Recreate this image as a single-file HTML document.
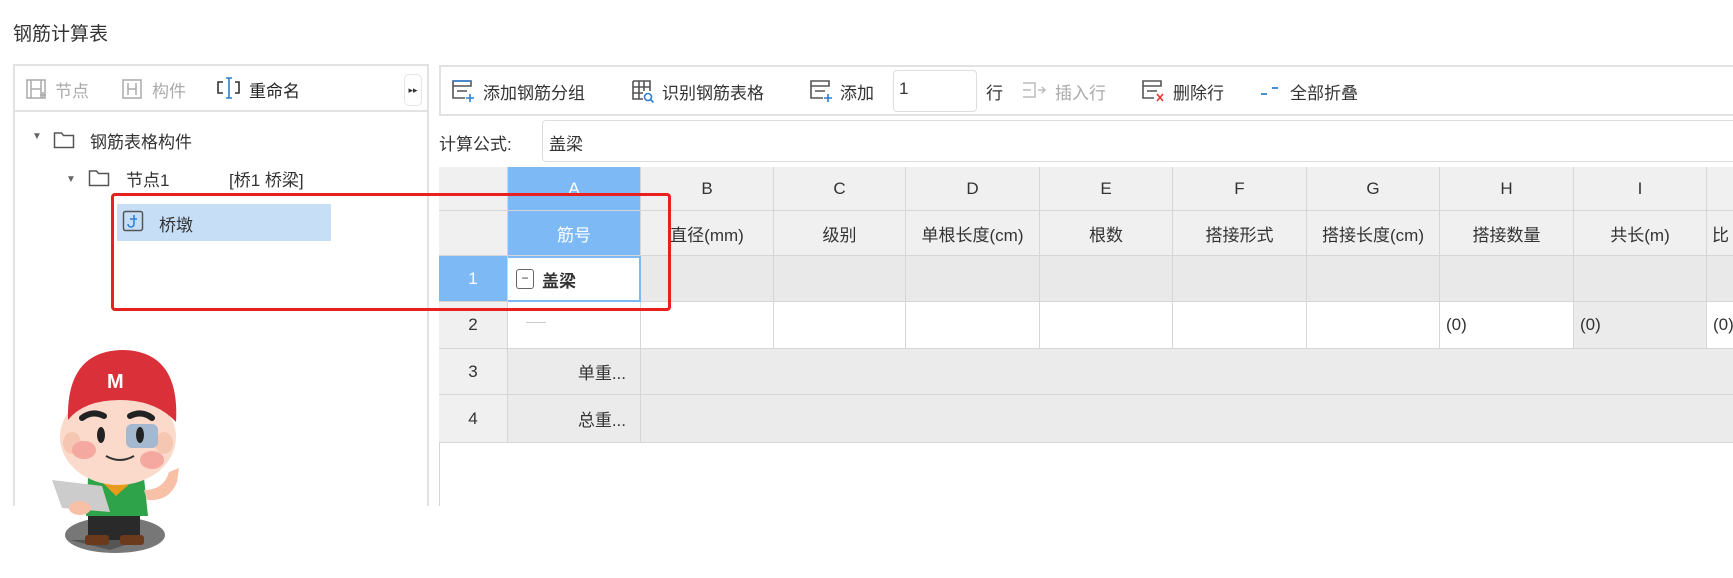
<!DOCTYPE html>
<html><head><meta charset="utf-8"><style>
*{margin:0;padding:0;box-sizing:border-box}
body{width:1733px;height:578px;background:#fff;font-family:"Liberation Sans","Noto Sans CJK SC",sans-serif;color:#333;position:relative;overflow:hidden;font-size:17px}
.a{position:absolute;white-space:nowrap}
.g{color:#aaa}
.cell{position:absolute;border-right:1px solid #d6d6d6;border-bottom:1px solid #d6d6d6;display:flex;align-items:center;justify-content:center;font-size:17px}
</style></head><body>
<div class="a" style="left:13px;top:19px;font-size:19px;color:#333">钢筋计算表</div>

<div class="a" style="left:13px;top:64px;width:416px;height:442px;border:2px solid #e2e2e2;border-bottom:none"></div>
<div class="a" style="left:13px;top:110px;width:416px;height:2px;background:#e2e2e2"></div>
<svg class="a" style="left:25px;top:77px" width="24" height="24" viewBox="0 0 24 24" fill="none" stroke="#aaa" stroke-width="1.5"><path d="M2 3h18v18H2z M6 3v18 M16 3v18 M6 12h10"/><path d="M15 18h6M18 15v6" stroke="#aaa"/></svg>
<div class="a g" style="left:55px;top:77px">节点</div>
<svg class="a" style="left:121px;top:77px" width="22" height="24" viewBox="0 0 22 24" fill="none" stroke="#aaa" stroke-width="1.5"><path d="M2 3h18v18H2z M7 6v12 M15 6v12 M7 12h8"/></svg>
<div class="a g" style="left:152px;top:77px">构件</div>
<svg class="a" style="left:215px;top:75px" width="28" height="26" viewBox="0 0 28 26" fill="none" stroke-width="1.6"><path d="M8 7H3v11h5 M20 7h4v11h-4" stroke="#333"/><path d="M14 3v20 M11 3h6 M11 23h6" stroke="#2d7fd3"/></svg>
<div class="a" style="left:249px;top:77px;color:#222">重命名</div>
<div class="a" style="left:404px;top:74px;width:18px;height:32px;border:1px solid #e5e5e5;border-radius:5px;font-size:9px;display:flex;align-items:center;justify-content:center;color:#333">▸▸</div>

<div class="a" style="left:32px;top:131px;font-size:10px;color:#666">▼</div>
<svg class="a" style="left:53px;top:130px" width="22" height="20" viewBox="0 0 22 20" fill="none" stroke="#555" stroke-width="1.5"><path d="M1.5 3h7l2 2.5h10v12h-19z"/></svg>
<div class="a" style="left:90px;top:128px">钢筋表格构件</div>
<div class="a" style="left:66px;top:174px;font-size:10px;color:#666">▼</div>
<svg class="a" style="left:88px;top:168px" width="22" height="20" viewBox="0 0 22 20" fill="none" stroke="#555" stroke-width="1.5"><path d="M1.5 3h7l2 2.5h10v12h-19z"/></svg>
<div class="a" style="left:126px;top:166px">节点1</div>
<div class="a" style="left:229px;top:166px">[桥1 桥梁]</div>
<div class="a" style="left:117px;top:204px;width:214px;height:37px;background:#c6def6"></div>
<svg class="a" style="left:122px;top:210px" width="22" height="22" viewBox="0 0 22 22" fill="none" stroke-width="1.5"><rect x="1.5" y="1.5" width="19" height="19" rx="2" stroke="#555"/><path d="M12 5v9a3 3 0 0 1-6 0 M8 9h7" stroke="#2d7fd3"/></svg>
<div class="a" style="left:159px;top:211px">桥墩</div>

<div class="a" style="left:439px;top:65px;width:1300px;height:51px;border:2px solid #e2e2e2;border-right:none"></div>
<svg class="a" style="left:450px;top:78px" width="26" height="26" viewBox="0 0 26 26" fill="none" stroke-width="1.6"><path d="M3 3h18v5H3z M3 8v12h12 M7 13h10" stroke="#555"/><path d="M3 3h18" stroke="#2d7fd3"/><path d="M16 20h8M20 16v8" stroke="#2d7fd3"/></svg>
<div class="a" style="left:483px;top:79px">添加钢筋分组</div>
<svg class="a" style="left:630px;top:78px" width="26" height="26" viewBox="0 0 26 26" fill="none" stroke-width="1.6"><path d="M3 3h17v10 M3 3v18h10 M3 9h17 M9 3v18 M14 3v10 M3 15h10" stroke="#555"/><circle cx="18" cy="19" r="3.5" stroke="#2d7fd3"/><path d="M20.5 21.5l3 3" stroke="#2d7fd3"/></svg>
<div class="a" style="left:662px;top:79px">识别钢筋表格</div>
<svg class="a" style="left:808px;top:78px" width="26" height="26" viewBox="0 0 26 26" fill="none" stroke-width="1.6"><path d="M3 3h18v5H3z M3 8v12h12 M7 13h10" stroke="#555"/><path d="M16 20h8M20 16v8" stroke="#2d7fd3"/></svg>
<div class="a" style="left:840px;top:79px">添加</div>
<div class="a" style="left:893px;top:70px;width:84px;height:42px;border:1px solid #ddd;border-radius:4px;padding:8px 5px">1</div>
<div class="a" style="left:986px;top:79px">行</div>
<svg class="a" style="left:1020px;top:79px" width="28" height="24" viewBox="0 0 28 24" fill="none" stroke="#bbb" stroke-width="1.5"><path d="M3 4h12v14H3 M3 11h8 M18 11h7 M22 8l3 3-3 3"/></svg>
<div class="a g" style="left:1055px;top:79px">插入行</div>
<svg class="a" style="left:1140px;top:78px" width="28" height="26" viewBox="0 0 28 26" fill="none" stroke-width="1.6"><path d="M3 3h18v5H3z M3 8v12h11 M7 13h10" stroke="#555"/><path d="M17 16l6 7M23 16l-6 7" stroke="#e33"/></svg>
<div class="a" style="left:1173px;top:79px">删除行</div>
<svg class="a" style="left:1258px;top:82px" width="24" height="20" viewBox="0 0 24 20" fill="none" stroke="#2d7fd3" stroke-width="1.8"><path d="M3 12h6 M14 6h6"/></svg>
<div class="a" style="left:1290px;top:79px">全部折叠</div>

<div class="a" style="left:439px;top:130px;color:#333">计算公式:</div>
<div class="a" style="left:542px;top:120px;width:1200px;height:42px;border:1px solid #ddd;border-right:none;border-radius:4px 0 0 4px;padding:9px 6px">盖梁</div>

<div class="a" style="left:439px;top:167px;width:1300px;height:276px;border-top:2px solid #d6d6d6;border-left:1px solid #d6d6d6"></div>
<div class="a" style="left:439px;top:443px;width:1300px;height:63px;border-left:1px solid #d6d6d6"></div>
<div id="g"></div>

<div class="a" style="left:111px;top:193px;width:560px;height:118px;border:3px solid #ea1f1f;border-radius:4px"></div>

<svg class="a" style="left:40px;top:325px" width="170" height="240" viewBox="0 0 170 230">
<ellipse cx="75" cy="205" rx="50" ry="18" fill="#777"/>
<path d="M30 210h70l-30 10z" fill="#555"/>
<rect x="48" y="180" width="52" height="30" rx="6" fill="#2a2a2a"/>
<rect x="45" y="205" width="24" height="10" rx="3" fill="#6b3a1c"/><rect x="80" y="205" width="24" height="10" rx="3" fill="#6b3a1c"/>
<path d="M48 148q27-12 56 0l4 38h-62z" fill="#2ea34a"/>
<path d="M58 148l18 18 20-18z" fill="#e89a1a"/>
<path d="M104 160q20 0 25-18l10-4-2 14q-8 20-30 18z" fill="#f8c0a6"/>
<path d="M12 150l50 6 8 26-48-4z" fill="#ccc"/>
<ellipse cx="40" cy="178" rx="11" ry="7" fill="#f8c0a6"/>
<ellipse cx="78" cy="107" rx="58" ry="48" fill="#fbdacb"/>
<ellipse cx="32" cy="113" rx="9" ry="11" fill="#f5c6b2"/>
<ellipse cx="124" cy="113" rx="9" ry="11" fill="#f5c6b2"/>
<path d="M28 90q-2-70 56-70 56 2 52 72q-20-22-56-22-36 0-52 20z" fill="#d9303a"/>
<text x="67" y="58" font-size="20" font-weight="bold" fill="#fff" font-family="Liberation Sans">M</text>
<path d="M42 88q10-8 22-2 M90 86q12-6 22 2" stroke="#222" stroke-width="6" fill="none" stroke-linecap="round"/>
<ellipse cx="61" cy="105" rx="4" ry="8" fill="#222"/>
<rect x="86" y="94" width="32" height="24" rx="6" fill="#9ab5cf" opacity=".9"/>
<ellipse cx="100" cy="105" rx="4" ry="8" fill="#222"/>
<ellipse cx="44" cy="120" rx="12" ry="9" fill="#f4a8a0"/>
<ellipse cx="112" cy="130" rx="12" ry="9" fill="#f4a8a0"/>
<path d="M66 126q14 8 28 0" stroke="#333" stroke-width="2" fill="none"/>
</svg>

<script>
var cols=[439,508,641,774,906,1040,1173,1307,1440,1574,1707,1840];
var rows=[167,211,256,302,349,395,443];
var L=["","A","B","C","D","E","F","G","H","I","J"];
var H2=["","筋号","直径(mm)","级别","单根长度(cm)","根数","搭接形式","搭接长度(cm)","搭接数量","共长(m)","比"];
var h="";
function c(x,y,w,hh,bg,txt,st){h+='<div class="cell" style="left:'+x+'px;top:'+y+'px;width:'+w+'px;height:'+hh+'px;background:'+bg+';'+(st||'')+'">'+(txt||'')+'</div>';}
for(var i=0;i<11;i++){var x=cols[i],w=cols[i+1]-x;
 var bg=i==1?'#7db9f4':'#f0f0f0';var col=i==1?'color:#fff;':'';
 c(x,rows[0],w,44,bg,L[i],col);
 c(x,rows[1],w,45,bg,i==10?'<span style="position:absolute;left:5px">比</span>':H2[i],col);
}
c(439,rows[2],69,46,'#7db9f4','1','color:#fff');
c(508,rows[2],133,46,'#fff','<span style="position:absolute;left:8px;top:11px;width:18px;height:20px;border:1px solid #666;border-radius:3px;font-size:12px;line-height:17px;text-align:center">−</span><span style="position:absolute;left:34px;font-weight:bold">盖梁</span>','border:2px solid #7db9f4;border-left:none');
for(var i=2;i<11;i++)c(cols[i],rows[2],cols[i+1]-cols[i],46,'#e9e9e9');
c(439,rows[3],69,47,'#f0f0f0','2');
c(508,rows[3],133,47,'#fff','<span style="position:absolute;left:18px;top:20px;width:20px;border-top:1px solid #ccc"></span>');
for(var i=2;i<11;i++){var t=i>=8?'<span style="position:absolute;left:6px">(0)</span>':'';c(cols[i],rows[3],cols[i+1]-cols[i],47,i==9?'#ebebeb':'#fff',t);}
c(439,rows[4],69,46,'#f0f0f0','3');
c(508,rows[4],133,46,'#ebebeb','<span style="position:absolute;right:14px">单重...</span>');
c(641,rows[4],1200,46,'#ebebeb');
c(439,rows[5],69,48,'#f0f0f0','4');
c(508,rows[5],133,48,'#ebebeb','<span style="position:absolute;right:14px">总重...</span>');
c(641,rows[5],1200,48,'#ebebeb');
document.getElementById('g').innerHTML=h;
</script>
</body></html>
